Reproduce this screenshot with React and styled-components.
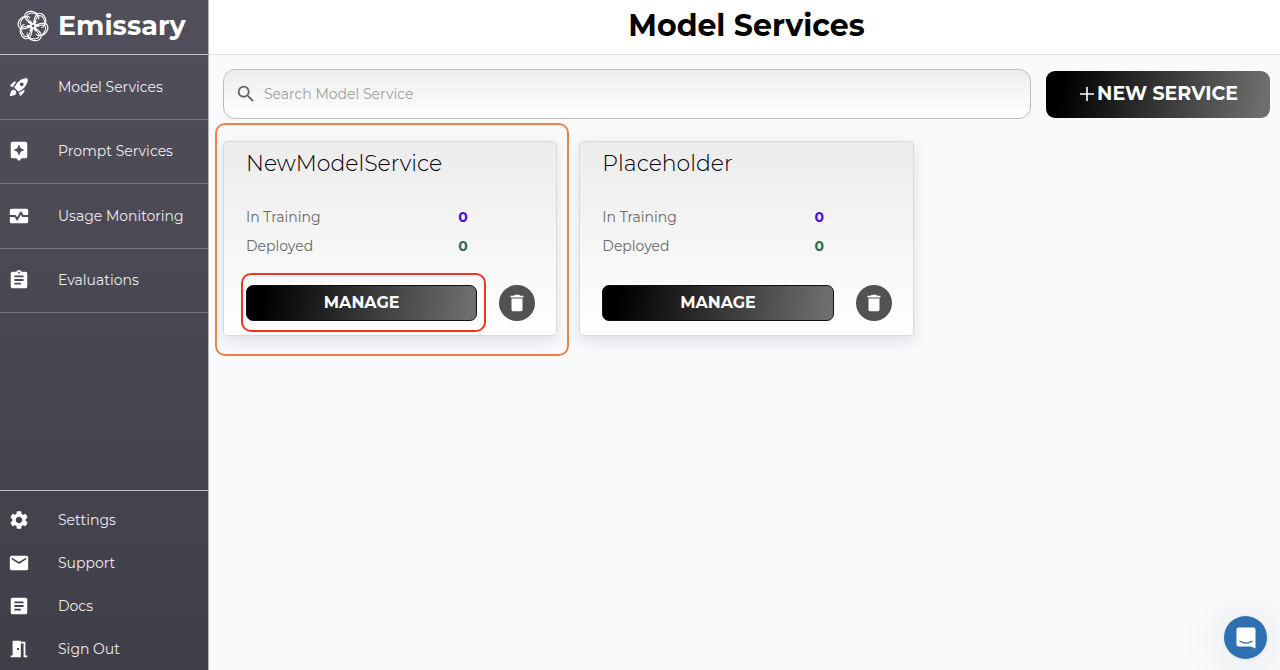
import React from "react";
import styled, { createGlobalStyle, css } from "styled-components";
import {
  MdArticle,
  MdAssignment,
  MdAssistant,
  MdDelete,
  MdEmail,
  MdMeetingRoom,
  MdMonitorHeart,
  MdRocketLaunch,
  MdSearch,
  MdSettings,
} from "react-icons/md";

const GlobalStyle = createGlobalStyle`
  *, *::before, *::after { box-sizing: border-box; }
  body {
    margin: 0;
    background: #f9fafc;
    font-family: Montserrat, Inter, "Open Sans", sans-serif;
    color: #1c1c1e;
  }
  button, input { font-family: inherit; }
`;

const Shell = styled.div`
  display: flex;
  min-height: 100vh;
`;

const Sidebar = styled.aside`
  flex: 0 0 209px;
  display: flex;
  flex-direction: column;
  background: linear-gradient(180deg, #504f5b 0%, #3f3f49 100%);
  border-right: 1px solid #b4b4ba;
`;

const Brand = styled.a`
  display: flex;
  align-items: center;
  gap: 9px;
  height: 55px;
  padding: 0 0 2px 17px;
  border-bottom: 1px solid #c4c4c8;
  color: #fff;
  font-size: 27px;
  font-weight: 700;
  line-height: 32px;
  text-decoration: none;
`;

const MainNav = styled.nav`
  display: flex;
  flex-direction: column;
  height: 258px;
`;

const FooterNav = styled.nav`
  margin-top: auto;
  padding-top: 7px;
  border-top: 1px solid #c4c4c8;
`;

const NavLink = styled.a`
  display: flex;
  align-items: center;
  gap: 28px;
  padding-left: 8px;
  color: #ececee;
  font-size: 14px;
  line-height: 20px;
  text-decoration: none;
  white-space: nowrap;

  svg {
    flex: none;
    width: 22px;
    height: 22px;
    color: #fff;
  }

  ${(p) =>
    p.$divided
      ? css`
          flex: 1;
          border-bottom: 1px solid #77777c;
        `
      : css`
          height: 43px;
        `}
`;

const Main = styled.main`
  flex: 1;
  min-width: 0;
`;

const Header = styled.header`
  display: flex;
  align-items: center;
  justify-content: center;
  height: 55px;
  padding: 0 10px 2px 14px;
  background: #fff;
  border-bottom: 1px solid #dfe1e5;
`;

const PageTitle = styled.h1`
  margin: 0;
  color: #000;
  font-size: 30px;
  font-weight: 700;
  line-height: 40px;
`;

const Content = styled.div`
  display: flex;
  flex-direction: column;
  gap: 22px;
  padding: 14px 10px 22px 14px;
`;

const Toolbar = styled.div`
  display: flex;
  align-items: center;
  gap: 15px;
`;

const SearchBox = styled.label`
  flex: 1;
  display: flex;
  align-items: center;
  gap: 7px;
  height: 50px;
  padding: 0 11px;
  border: 1px solid #bcbdc0;
  border-radius: 12px;
  background: linear-gradient(180deg, #ededed, #fff);

  svg {
    flex: none;
    width: 22px;
    height: 22px;
    color: #666;
  }
`;

const SearchInput = styled.input`
  flex: 1;
  min-width: 0;
  padding: 0;
  border: 0;
  outline: 0;
  background: transparent;
  color: #1c1c1e;
  font-size: 14px;
  line-height: 20px;

  &::placeholder {
    color: #a0a0a0;
    opacity: 1;
  }
`;

const DarkButton = styled.button`
  display: flex;
  align-items: center;
  justify-content: center;
  padding: 0;
  border: 1px solid #111;
  background: linear-gradient(100deg, #000 8%, #6e6e6e 96%);
  background-origin: border-box;
  color: #fff;
  font-weight: 700;
  cursor: pointer;
`;

const NewServiceButton = styled(DarkButton)`
  gap: 1px;
  flex: 0 0 224px;
  height: 47px;
  border: 0;
  border-radius: 9px;
  font-size: 19px;
  line-height: 24px;
`;

const ManageButton = styled(DarkButton)`
  width: 100%;
  height: 36px;
  border-radius: 7px;
  font-size: 16px;
  line-height: 20px;
`;

const CardGrid = styled.div`
  display: grid;
  grid-template-columns: repeat(3, 1fr);
  gap: 22px;
`;

const Card = styled.article`
  position: relative;
  padding: 8px 21px 14px 22px;
  border: 1px solid #d9dadc;
  border-radius: 4px;
  background: linear-gradient(180deg, #ececec, #fff);
  box-shadow: 0 5px 14px rgba(40, 50, 70, 0.13);
`;

const CardTitle = styled.h2`
  margin: 0 0 29px;
  color: #000;
  font-size: 22px;
  font-weight: 300;
  line-height: 28px;
`;

const Stats = styled.dl`
  display: grid;
  grid-template-columns: 11fr 4fr;
  row-gap: 9px;
  margin: 0 0 29px;
  font-size: 14px;
  line-height: 20px;
`;

const StatName = styled.dt`
  color: #686868;
`;

const StatValue = styled.dd`
  margin: 0;
  color: ${(p) => p.$color};
  font-weight: 700;
`;

const Actions = styled.div`
  display: flex;
  align-items: center;
  gap: 22px;
`;

const ManageSlot = styled.div`
  position: relative;
  flex: 1;
`;

const DeleteButton = styled.button`
  display: grid;
  place-items: center;
  flex: none;
  width: 36px;
  height: 36px;
  padding: 0;
  border: 0;
  border-radius: 50%;
  background: #525252;
  color: #fff;
  cursor: pointer;

  svg {
    width: 22px;
    height: 22px;
  }
`;

const Highlight = styled.span`
  position: absolute;
  inset: ${(p) => p.$inset};
  border: 2px solid ${(p) => p.$color};
  border-radius: 10px;
  pointer-events: none;
`;

const ChatButton = styled.button`
  position: fixed;
  right: 13px;
  bottom: 11px;
  display: grid;
  place-items: center;
  width: 43px;
  height: 43px;
  padding: 0;
  border: 0;
  border-radius: 50%;
  background: #2f70b2;
  box-shadow: 0 1px 5px rgba(0, 0, 0, 0.08), 0 2px 50px rgba(0, 0, 0, 0.12);
  cursor: pointer;
`;

function Logo() {
  return (
    <svg width="32" height="32" viewBox="-16 -16 32 32" fill="none" stroke="#fff" aria-hidden="true">
      {[0, 60, 120, 180, 240, 300].map((angle) => (
        <g key={angle} transform={`rotate(${angle - 10})`}>
          <path d="M0 0C-2-3-7-7-6.500-11C-6-14.500-2-15.800 1.500-14.500C6-13 7.500-10 6-7.500" strokeWidth="1.2" />
          <path d="M0 0C-1-4-5-8-4.500-10.500C-4-13.200 0-13.800 4-12C8-10 8-7.500 6.500-5.500" strokeWidth="1" />
          <path d="M0 0L-2.200-5.500" strokeWidth="2.200" />
        </g>
      ))}
      <circle r="3" fill="#fff" stroke="none" />
      <circle r="1.3" fill="#504f5b" stroke="none" />
    </svg>
  );
}

function PlusIcon() {
  return (
    <svg width="18" height="18" viewBox="0 0 18 18" fill="none" stroke="#fff" strokeWidth="1.6" aria-hidden="true">
      <path d="M9 2V16M2 9H16" />
    </svg>
  );
}

function ChatIcon() {
  return (
    <svg width="20" height="22" viewBox="0 0 20 22" fill="none" aria-hidden="true">
      <path
        d="M2.500 0.500H17.500Q19.500 0.500 19.500 2.500V21.500L14.500 19.500H2.500Q0.500 19.500 0.500 17.500V2.500Q0.500 0.500 2.500 0.500Z"
        fill="#fff"
      />
      <path d="M4 14.300Q10 18 16 14.300" stroke="#2f70b2" strokeWidth="1.3" strokeLinecap="round" />
    </svg>
  );
}

const mainLinks = [
  { label: "Model Services", Icon: MdRocketLaunch },
  { label: "Prompt Services", Icon: MdAssistant },
  { label: "Usage Monitoring", Icon: MdMonitorHeart },
  { label: "Evaluations", Icon: MdAssignment },
];

const footerLinks = [
  { label: "Settings", Icon: MdSettings },
  { label: "Support", Icon: MdEmail },
  { label: "Docs", Icon: MdArticle },
  { label: "Sign Out", Icon: MdMeetingRoom },
];

const services = [
  { name: "NewModelService", training: 0, deployed: 0, highlighted: true },
  { name: "Placeholder", training: 0, deployed: 0, highlighted: false },
];

function ServiceCard({ name, training, deployed, highlighted }) {
  return (
    <Card>
      <CardTitle>{name}</CardTitle>
      <Stats>
        <StatName>In Training</StatName>
        <StatValue $color="#4b12e0">{training}</StatValue>
        <StatName>Deployed</StatName>
        <StatValue $color="#356b4d">{deployed}</StatValue>
      </Stats>
      <Actions>
        <ManageSlot>
          <ManageButton type="button">MANAGE</ManageButton>
          {highlighted && <Highlight $inset="-12px -9px -11px -5px" $color="#ee3620" />}
        </ManageSlot>
        <DeleteButton type="button" aria-label={`Delete ${name}`}>
          <MdDelete />
        </DeleteButton>
      </Actions>
      {highlighted && <Highlight $inset="-19px -13px -21px -9px" $color="#f08048" />}
    </Card>
  );
}

export default function App() {
  return (
    <>
      <GlobalStyle />
      <Shell>
        <Sidebar>
          <Brand href="#home">
            <Logo />
            Emissary
          </Brand>
          <MainNav aria-label="Main">
            {mainLinks.map(({ label, Icon }) => (
              <NavLink key={label} href="#" $divided>
                <Icon />
                {label}
              </NavLink>
            ))}
          </MainNav>
          <FooterNav aria-label="Account">
            {footerLinks.map(({ label, Icon }) => (
              <NavLink key={label} href="#">
                <Icon />
                {label}
              </NavLink>
            ))}
          </FooterNav>
        </Sidebar>
        <Main>
          <Header>
            <PageTitle>Model Services</PageTitle>
          </Header>
          <Content>
            <Toolbar>
              <SearchBox>
                <MdSearch />
                <SearchInput type="text" aria-label="Search Model Service" placeholder="Search Model Service" />
              </SearchBox>
              <NewServiceButton type="button">
                <PlusIcon />
                NEW SERVICE
              </NewServiceButton>
            </Toolbar>
            <CardGrid>
              {services.map((service) => (
                <ServiceCard key={service.name} {...service} />
              ))}
            </CardGrid>
          </Content>
        </Main>
      </Shell>
      <ChatButton type="button" aria-label="Open chat">
        <ChatIcon />
      </ChatButton>
    </>
  );
}
